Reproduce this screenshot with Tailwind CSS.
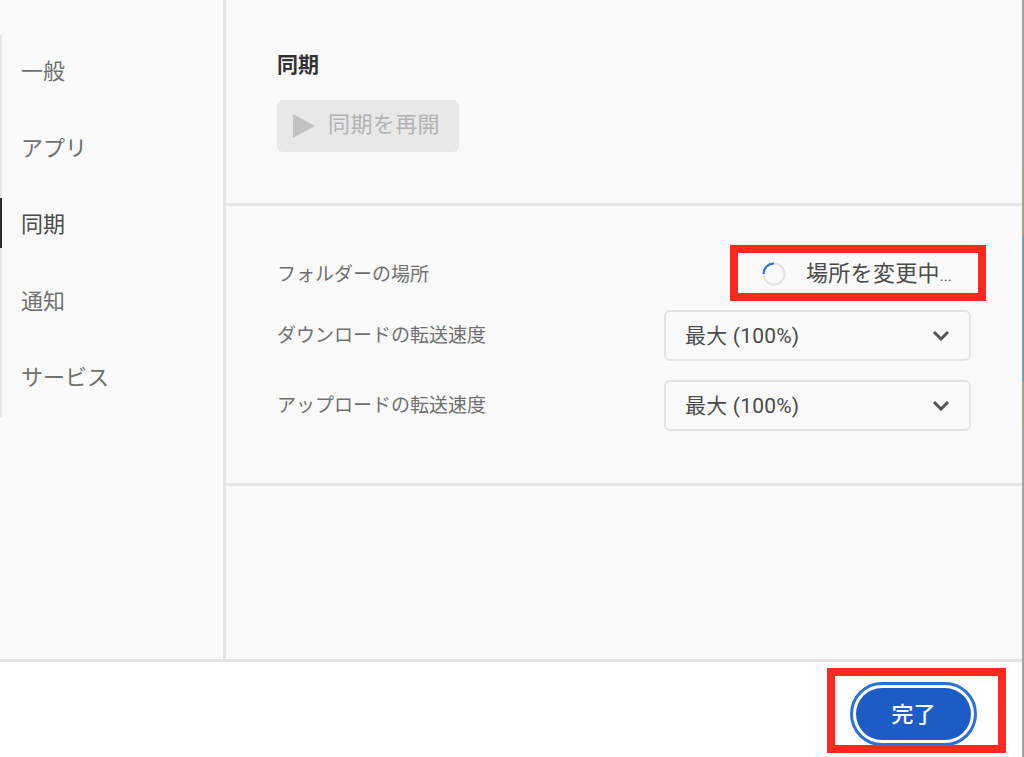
<!DOCTYPE html>
<html lang="ja">
<head>
<meta charset="utf-8">
<script src="https://cdn.jsdelivr.net/npm/@tailwindcss/browser@4"></script>
</head>
<body class="m-0 bg-white overflow-hidden font-['Roboto','Noto_Sans_CJK_JP',sans-serif]">
<div class="relative w-[1024px] h-[757px] flex flex-col overflow-hidden">
  <div class="h-[662px] flex bg-[#fafafa] border-b-[3px] border-[#e4e4e4]">
    <nav class="w-[226px] shrink-0 border-r-[3px] border-[#e4e4e4] pt-[35px]">
      <ul class="border-l-2 border-[#e6e6e6] h-[383px] text-[22px] text-[#707070] pl-[19px]">
        <li class="h-[73px] flex items-center">一般</li>
        <li class="h-[77px] pt-[3px] flex items-center">アプリ</li>
        <li class="relative h-[79px] flex items-center text-[#4b4b4b]"><span class="absolute left-[-21px] top-[13px] w-[2px] h-[50px] bg-[#2c2c2c]"></span>同期</li>
        <li class="h-[75px] flex items-center">通知</li>
        <li class="h-[76px] flex items-center">サービス</li>
      </ul>
    </nav>
    <main class="flex-1 flex flex-col pr-[2px]">
      <section class="h-[206px] shrink-0 border-b-[3px] border-[#e6e6e6] pl-[51px] pt-[50px]">
        <h2 class="text-[21px] leading-[30px] font-bold text-[#333333]">同期</h2>
        <button class="mt-[20px] w-[182px] h-[52px] bg-[#e8e8e8] rounded-[6px] flex items-center pl-[16px] gap-[13px] text-[22px] text-[#b3b3b3]">
          <svg width="22" height="24" viewBox="0 0 22 24"><path d="M0 0L22 12L0 24Z" fill="#c2c2c2"/></svg>
          <span class="tracking-[0.4px] leading-[30px] mt-[-3px]">同期を再開</span>
        </button>
      </section>
      <section class="h-[280px] shrink-0 border-b-[3px] border-[#e6e6e6] pl-[51px] pr-[51px] pt-[44px]">
        <div class="h-[46px] flex items-center justify-between">
          <span class="text-[19px] text-[#707070] mt-[4px]">フォルダーの場所</span>
          <div class="flex items-center w-[307px] relative text-[22px] text-[#4b4b4b]">
            <svg class="absolute left-[98px] top-[5px]" width="24" height="24" viewBox="0 0 24 24" fill="none"><circle cx="12" cy="12" r="10.5" stroke="#e3e3e3" stroke-width="2"/><path d="M1.5 12A10.5 10.5 0 0 1 12 1.5" stroke="#2f6fdc" stroke-width="2"/></svg>
            <span class="ml-[142px] tracking-[0.3px]">場所を変更中<span class="text-[15px] tracking-normal">...</span></span>
          </div>
        </div>
        <div class="mt-[13px] h-[52px] flex items-center justify-between">
          <span class="text-[19px] text-[#707070] mt-[2px]">ダウンロードの転送速度</span>
          <div class="w-[307px] h-[51px] border-2 border-[#e3e3e3] rounded-[6px] flex items-center justify-between pl-[19px] pr-[19px] text-[21px] text-[#4b4b4b]">
            <span class="mt-[3px] tracking-[0.2px]">最大 (100%)</span>
            <svg width="18" height="11" viewBox="0 0 18 11" fill="none"><path d="M2 2L9 9L16 2" stroke="#555" stroke-width="3"/></svg>
          </div>
        </div>
        <div class="mt-[18px] h-[52px] flex items-center justify-between">
          <span class="text-[19px] text-[#707070] mt-[2px]">アップロードの転送速度</span>
          <div class="w-[307px] h-[51px] border-2 border-[#e3e3e3] rounded-[6px] flex items-center justify-between pl-[19px] pr-[19px] text-[21px] text-[#4b4b4b]">
            <span class="mt-[3px] tracking-[0.2px]">最大 (100%)</span>
            <svg width="18" height="11" viewBox="0 0 18 11" fill="none"><path d="M2 2L9 9L16 2" stroke="#555" stroke-width="3"/></svg>
          </div>
        </div>
      </section>
    </main>
  </div>
  <footer class="flex-1 flex justify-end items-start pr-[47px] pt-[20px]">
    <button class="w-[127px] h-[64px] rounded-full border-[3px] border-[#2c6fd6] p-[3px] bg-white">
      <span class="w-full h-full rounded-full bg-[#1c5cc4] text-white text-[22px] font-medium flex items-center justify-center">完了</span>
    </button>
  </footer>
  <div class="absolute left-[730px] top-[245px] w-[256px] h-[56px] border-[8px] border-[#ff2a1f]"></div>
  <div class="absolute left-[827px] top-[668px] w-[179px] h-[85px] border-[8px] border-[#ff2a1f]"></div>
  <div class="absolute right-0 top-0 bottom-0 w-[2px] bg-[#a3a3a3]"></div>
  <div class="absolute right-0 top-[167px] h-[69px] w-[2px] bg-[#a3a38c]"></div>
  <div class="absolute right-0 top-[236px] h-[146px] w-[2px] bg-[#7f9cab]"></div>
  <div class="absolute right-0 top-[382px] h-[44px] w-[2px] bg-[#a3a38c]"></div>
</div>
</body>
</html>
